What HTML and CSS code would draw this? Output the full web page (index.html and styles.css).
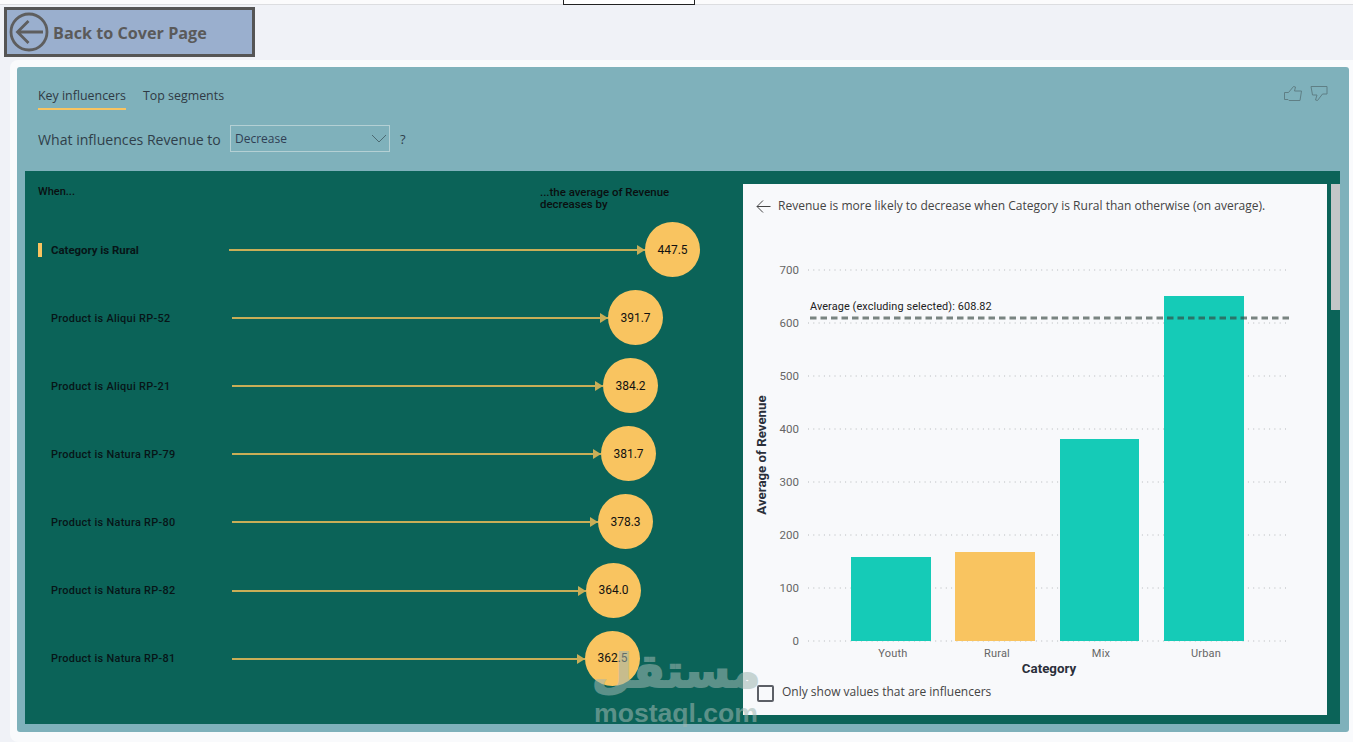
FILE: index.html
```html
<!DOCTYPE html>
<html lang="en">
<head>
<meta charset="utf-8">
<title>Key influencers</title>
<link rel="stylesheet" href="styles.css">
</head>
<body>
<div class="topstrip"><div class="stub"></div></div>
<div class="backrow">
  <a class="back">
    <svg class="back-icon" width="40" height="40" viewBox="0 0 40 40"><circle cx="20" cy="20" r="18" fill="none" stroke="#5e5e5e" stroke-width="2.8"/><path d="M34 20H9M19.500 9 8.500 20 19.500 31" fill="none" stroke="#5e5e5e" stroke-width="2.8"/></svg>
    <span>Back to Cover Page</span>
  </a>
</div>
<main class="frame">
  <section class="card">
    <div class="card-head">
      <div>
        <nav class="tabs">
          <span class="tab active">Key influencers</span>
          <span class="tab">Top segments</span>
        </nav>
        <div class="question">
          <span class="q-text">What influences Revenue to</span>
          <div class="select"><span>Decrease</span>
            <svg width="16" height="9" viewBox="0 0 16 9"><path d="M1 1l7 7 7-7" fill="none" stroke="#4c6a72" stroke-width="1"/></svg>
          </div>
          <span class="q-mark">?</span>
        </div>
      </div>
      <div class="thumbs">
        <svg width="18" height="17" viewBox="0 0 18 17"><path d="M.5 7.500h4l5-6 2 .5-1 4h7l-1.500 9.500H5l-1-1H.5z" fill="none" stroke="#5f7f85"/></svg>
        <svg width="18" height="17" viewBox="0 0 18 17"><path d="M1 1.500h16v7.500h-4.500l-5 6.500-2-.5 1.500-5H2.500z" fill="none" stroke="#5f7f85"/></svg>
      </div>
    </div>
    <div class="dark">
      <div class="influencers">
        <div class="inf-head">
          <span class="inf-when">When...</span>
          <span class="inf-avg">...the average of Revenue decreases by</span>
        </div>
        <div class="row selected"><i class="mark"></i><span class="label">Category is Rural</span><span class="line" style="width:416px"></span><span class="bubble">447.5</span></div>
        <div class="row"><i class="mark"></i><span class="label">Product is Aliqui RP-52</span><span class="line" style="width:376px"></span><span class="bubble">391.7</span></div>
        <div class="row"><i class="mark"></i><span class="label">Product is Aliqui RP-21</span><span class="line" style="width:371px"></span><span class="bubble">384.2</span></div>
        <div class="row"><i class="mark"></i><span class="label">Product is Natura RP-79</span><span class="line" style="width:369px"></span><span class="bubble">381.7</span></div>
        <div class="row"><i class="mark"></i><span class="label">Product is Natura RP-80</span><span class="line" style="width:366px"></span><span class="bubble">378.3</span></div>
        <div class="row"><i class="mark"></i><span class="label">Product is Natura RP-82</span><span class="line" style="width:354px"></span><span class="bubble">364.0</span></div>
        <div class="row"><i class="mark"></i><span class="label">Product is Natura RP-81</span><span class="line" style="width:353px"></span><span class="bubble">362.5</span></div>
      </div>
      <div class="detail">
        <div class="detail-head">
          <svg width="15" height="13" viewBox="0 0 15 13"><path d="M14.500 6.500H1M7 .500l-6 6 6 6" fill="none" stroke="#444" stroke-width="1"/></svg>
          <span>Revenue is more likely to decrease when Category is Rural than otherwise (on average).</span>
        </div>
        <svg class="chart" width="584" height="430" viewBox="743 250 584 430">
          <g class="grid">
            <line x1="808" x2="1290" y1="270" y2="270"/><line x1="808" x2="1290" y1="323" y2="323"/><line x1="808" x2="1290" y1="376" y2="376"/><line x1="808" x2="1290" y1="429" y2="429"/><line x1="808" x2="1290" y1="482" y2="482"/><line x1="808" x2="1290" y1="535" y2="535"/><line x1="808" x2="1290" y1="588" y2="588"/><line x1="808" x2="1290" y1="641" y2="641"/>
          </g>
          <g class="ticks">
            <text x="799" y="274">700</text><text x="799" y="327">600</text><text x="799" y="380">500</text><text x="799" y="433">400</text><text x="799" y="486">300</text><text x="799" y="539">200</text><text x="799" y="592">100</text><text x="799" y="645">0</text>
          </g>
          <rect class="bar" x="851" y="557" width="80" height="84"/>
          <rect class="bar sel" x="955" y="552" width="80" height="89"/>
          <rect class="bar" x="1060" y="439" width="79" height="202"/>
          <rect class="bar" x="1164" y="296" width="80" height="345"/>
          <line class="avg" x1="810" x2="1290" y1="318" y2="318"/>
          <text class="avg-label" x="810" y="310">Average (excluding selected): 608.82</text>
          <g class="cats">
            <text x="893" y="657">Youth</text><text x="997" y="657">Rural</text><text x="1101" y="657">Mix</text><text x="1206" y="657">Urban</text>
          </g>
          <text class="axis" x="1049" y="673">Category</text>
          <text class="axis" transform="translate(766 455) rotate(-90)">Average of Revenue</text>
        </svg>
        <label class="only"><i class="check"></i><span>Only show values that are influencers</span></label>
      </div>
      <div class="scroll"><div class="thumb"></div></div>
    </div>
  </section>
</main>
<div class="watermark"><span class="wm-ar" lang="ar" dir="rtl">مستقل</span><span class="wm-en">mostaql.com</span></div>
</body>
</html>
```
FILE: styles.css
```css
* { box-sizing: border-box; }
html, body { margin: 0; height: 100%; }
body {
  width: 1353px;
  height: 742px;
  overflow: hidden;
  position: relative;
  background: #f0f2f7;
  font-family: "Open Sans", "Noto Sans", sans-serif;
  color: #333;
}
.topstrip {
  height: 5px;
  background: #fbfbfc;
  border-bottom: 1px solid #dcdde0;
  padding-left: 563px;
}
.stub {
  width: 132px;
  height: 5px;
  border: 1px solid #222;
  border-top: 0;
  background: #fff;
}
.backrow { height: 55px; padding: 2px 0 0 4px; }
.back {
  width: 251px;
  height: 50px;
  background: #9aafce;
  border: 3px solid #555;
  display: flex;
  align-items: center;
  gap: 4px;
  padding-left: 2px;
  color: #5a5a5a;
  font-weight: 700;
  font-size: 16.200px;
}
.back span { margin-top: 2px; }
.back-icon { flex: none; }
.frame {
  margin-left: 10px;
  height: 682px;
  background: #f9fafc;
  border-radius: 8px 0 0 8px;
  padding: 7px 4px 10px 7px;
}
.card {
  height: 665px;
  background: #7fb1bb;
  border-radius: 3px;
  padding: 0 9px 8px 8px;
  display: flex;
  flex-direction: column;
}
.card-head {
  height: 104px;
  display: flex;
  justify-content: space-between;
  padding: 0 12px 0 13px;
  flex: none;
}
.tabs { display: flex; gap: 17px; padding-top: 20px; }
.tab {
  font-size: 12.400px;
  line-height: 18px;
  height: 23px;
  color: #2f3a44;
}
.tab.active { border-bottom: 2px solid #f9c460; }
.question { display: flex; align-items: center; margin-top: 15px; height: 28px; }
.q-text { font-size: 14.100px; color: #2f3f4a; width: 192px; }
.select {
  width: 160px;
  height: 27px;
  margin-top: -2px;
  border: 1px solid #b4d0d4;
  display: flex;
  align-items: center;
  justify-content: space-between;
  padding: 0 2px 0 4px;
  font-size: 12px;
  color: #2f3f55;
}
.q-mark { margin-left: 10px; font-size: 13px; color: #2f3f4a; }
.thumbs { display: flex; gap: 8px; padding-top: 18px; }
.dark {
  flex: 1;
  background: #0b6358;
  display: flex;
  padding: 13px 0 9px 0;
  min-height: 0;
}
.influencers {
  width: 718px;
  flex: none;
  margin-top: -13px;
  padding-left: 13px;
}
.inf-head {
  height: 45px;
  padding-top: 15px;
  font-family: Roboto, sans-serif;
  font-size: 11px;
  font-weight: 500;
  line-height: 12px;
  color: #0a0f10;
  display: flex;
}
.inf-when { width: 502px; flex: none; }
.inf-avg { width: 150px; font-size: 11.450px; }
.row {
  height: 68.100px;
  display: flex;
  align-items: center;
  font-family: Roboto, sans-serif;
  font-size: 10.900px;
  font-weight: 500;
  color: #071517;
  letter-spacing: .3px;
}
.mark { width: 4px; height: 14px; margin-right: 9px; flex: none; }
.selected .mark { background: #f9c460; }
.label { width: 181px; flex: none; white-space: nowrap; }
.selected .label { width: 178px; font-weight: 700; font-size: 11.400px; letter-spacing: 0; }
.line {
  height: 2px;
  background: #c9ae57;
  flex: none;
  position: relative;
}
.line::after {
  content: "";
  position: absolute;
  right: 0;
  top: -4px;
  border-left: 8px solid #c9ae57;
  border-top: 5px solid transparent;
  border-bottom: 5px solid transparent;
}
.bubble {
  width: 55px;
  height: 55px;
  margin-top: -1px;
  border-radius: 50%;
  background: #f9c460;
  flex: none;
  display: flex;
  align-items: center;
  justify-content: center;
  font-size: 12px;
  font-weight: 400;
  color: #111;
  letter-spacing: 0;
}
.detail {
  width: 584px;
  flex: none;
  background: #f8f9fb;
  display: flex;
  flex-direction: column;
}
.detail-head {
  height: 66px;
  display: flex;
  align-items: flex-start;
  gap: 7px;
  padding: 14px 0 0 13px;
  font-size: 12.030px;
  line-height: 16px;
  color: #444;
}
.detail-head svg { margin-top: 2px; flex: none; }
.chart { display: block; flex: none; }
.grid line { stroke: #b5b8bb; stroke-width: 1; stroke-dasharray: 1 4.300; }
.ticks text { font-family: Roboto, sans-serif; font-size: 11.500px; fill: #666; text-anchor: end; }
.bar { fill: #15cbb7; }
.bar.sel { fill: #f9c460; }
.avg { stroke: #34453f; stroke-opacity: .65; stroke-width: 3; stroke-dasharray: 6.500 4; }
.avg-label { font-family: Roboto, sans-serif; font-size: 10.900px; fill: #222; letter-spacing: .1px; }
.cats text { font-family: Roboto, sans-serif; font-size: 11px; fill: #666; text-anchor: middle; letter-spacing: .2px; }
.axis { font-family: Roboto, sans-serif; font-size: 13.300px; font-weight: 700; fill: #2a2f3a; text-anchor: middle; }
.only {
  display: flex;
  align-items: flex-start;
  gap: 8px;
  padding: 1px 0 0 14px;
  font-size: 12px;
  line-height: 14px;
  color: #444;
}
.only span { margin-top: 4px; }
.check {
  width: 17px;
  height: 17px;
  border: 2px solid #5c5f66;
  border-radius: 2px;
  margin-top: 4px;
  flex: none;
}
.scroll { width: 9px; margin-left: 4px; flex: none; }
.thumb { height: 126px; background: #c4c6c8; }
.watermark {
  position: absolute;
  left: 590px;
  top: 642px;
  width: 172px;
  display: flex;
  flex-direction: column;
  align-items: center;
  color: #9fb7b2;
  opacity: .55;
  font-weight: 700;
  pointer-events: none;
}
.wm-ar { font-family: "DejaVu Sans", sans-serif; font-size: 46px; line-height: 58px; -webkit-text-stroke: 2px #9fb7b2; }
.wm-en { font-family: "Liberation Sans", sans-serif; font-size: 26.600px; line-height: 26px; }
```
